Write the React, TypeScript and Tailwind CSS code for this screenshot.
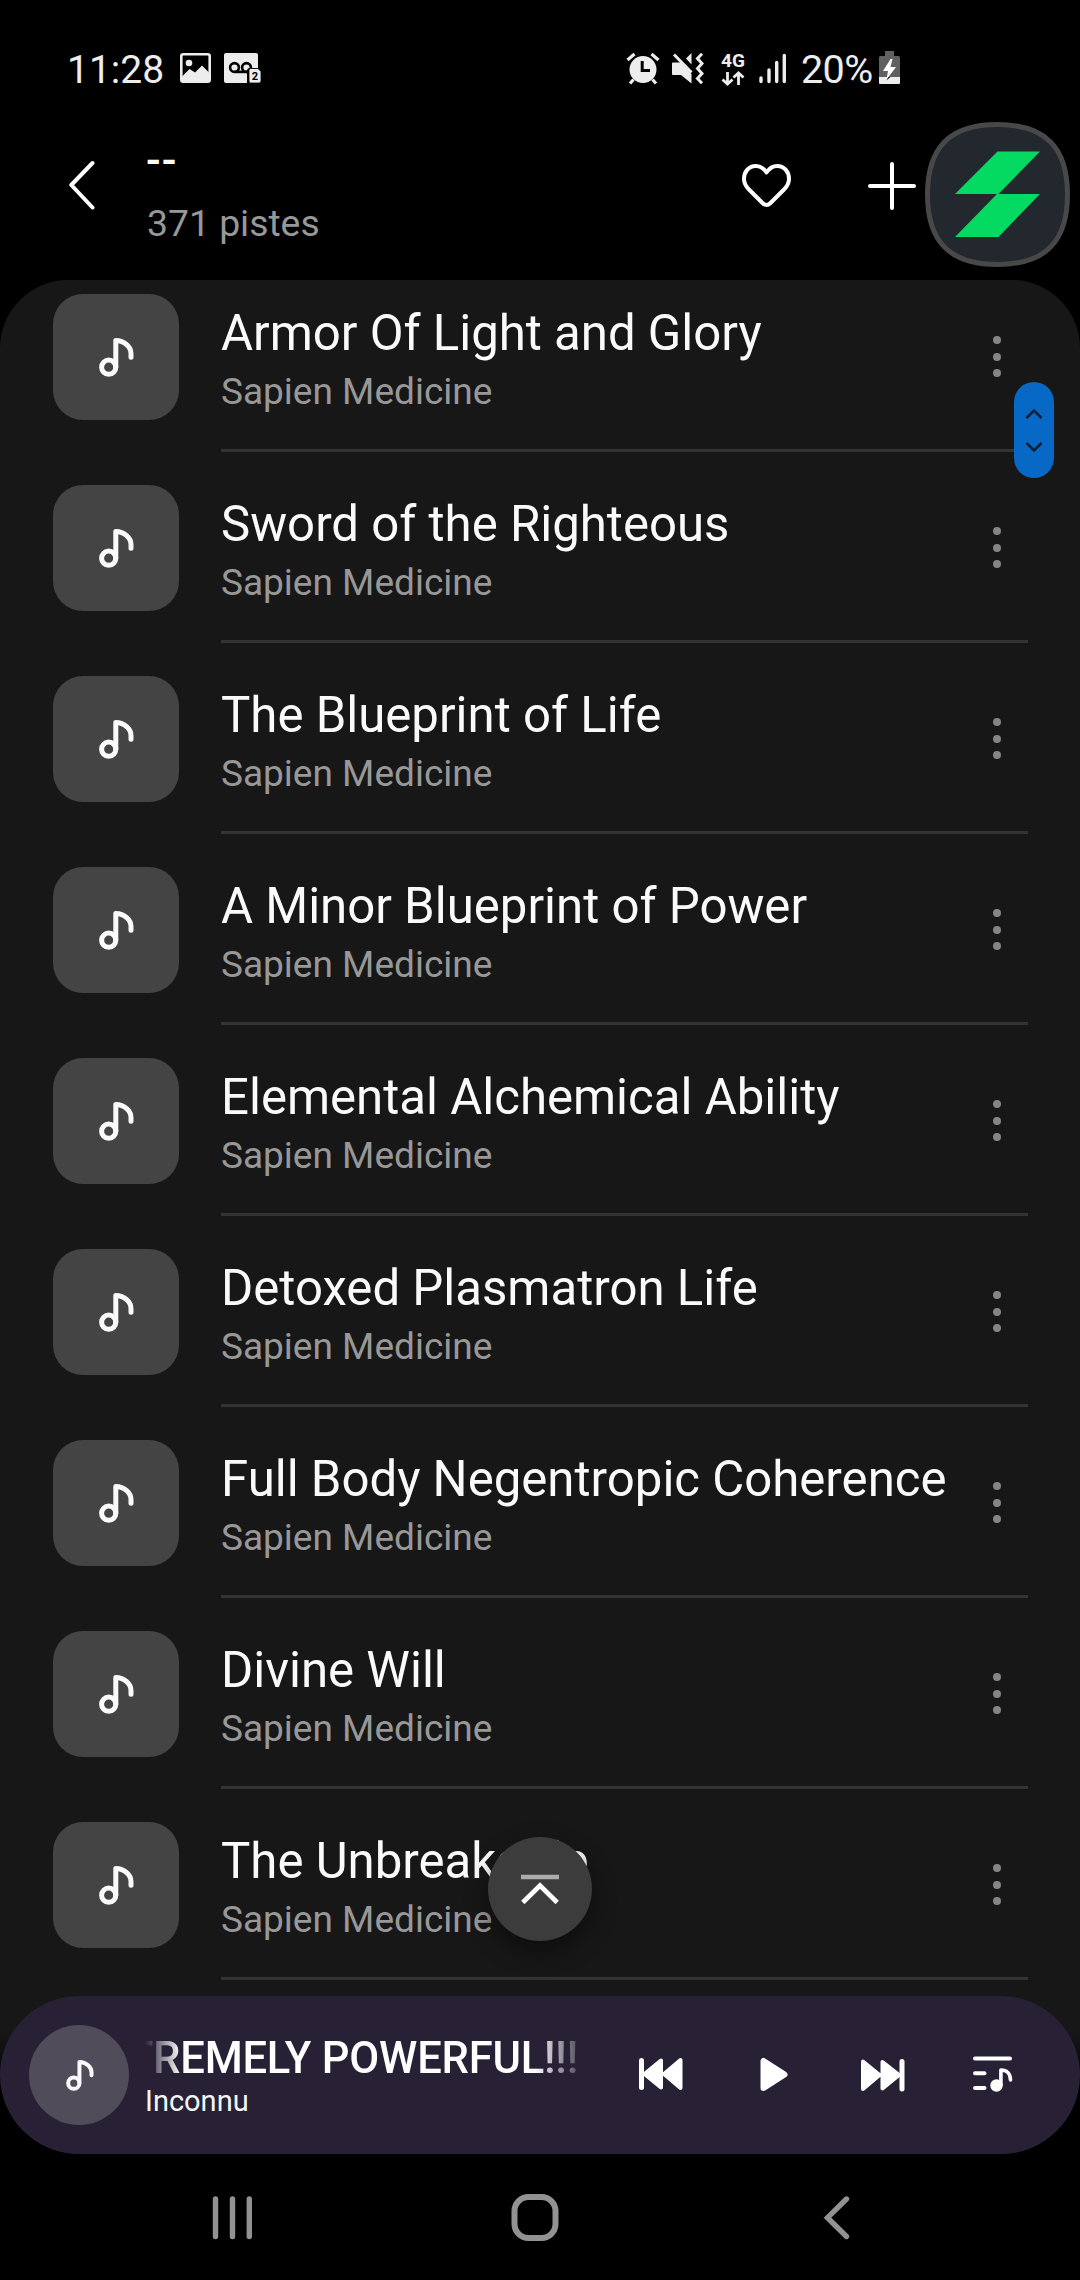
import type { ReactNode } from "react";

const tracks = [
  "Armor Of Light and Glory",
  "Sword of the Righteous",
  "The Blueprint of Life",
  "A Minor Blueprint of Power",
  "Elemental Alchemical Ability",
  "Detoxed Plasmatron Life",
  "Full Body Negentropic Coherence",
  "Divine Will",
  "The Unbreakable",
];

function NoteIcon({ className }: { className: string }) {
  return (
    <svg viewBox="0 0 35 39" className={className} fill="none" stroke="#fafafa" strokeWidth="5" strokeLinecap="round" strokeLinejoin="round">
      <circle cx="9.7" cy="29.2" r="7.1" />
      <path d="M16.8 29V2.6C25.500 2.800 32 9 32 15.500V19.200" />
    </svg>
  );
}

function StatusBar() {
  return (
    <div className="flex h-[110px] shrink-0 items-start pt-[50px]">
      <span className="ml-[67px] w-[113px] text-[39px] leading-[40px] whitespace-nowrap text-[#ededed]">11:28</span>
      <svg className="mt-[3px] h-[30px] w-[31px]" viewBox="0 0 31 30">
        <rect x="1.300" y="1.300" width="28.400" height="27.400" rx="2" fill="none" stroke="#ededed" strokeWidth="2.600" />
        <circle cx="9" cy="10" r="3.300" fill="#ededed" />
        <path d="M2 23.500 9.500 16 15 19.500 22 12.500 29 19.500V28H2Z" fill="#ededed" />
      </svg>
      <svg className="mt-[3px] ml-[13px] h-[30px] w-[37px]" viewBox="0 0 37 30">
        <path d="M2 0H32Q34 0 34 2V15H26Q23 15 23 18V30H2Q0 30 0 28V2Q0 0 2 0Z" fill="#ededed" />
        <g fill="none" stroke="#000" strokeWidth="2.600">
          <circle cx="10.500" cy="14.500" r="4.400" />
          <circle cx="22.500" cy="14.500" r="4.400" />
          <path d="M10.500 18.900H23" />
        </g>
        <path d="M26.500 15.500H34L37 18.500V28Q37 30 35 30H26.500Q25 30 25 28V17Q25 15.500 26.500 15.500Z" fill="#ededed" stroke="#000" strokeWidth=".8" />
        <text x="31" y="27" fontSize="11" fontWeight="700" textAnchor="middle" fill="#000">2</text>
      </svg>
      <div className="ml-auto flex items-start pr-[180px]">
        <svg className="mt-[2px] h-[33px] w-[34px]" viewBox="0 0 34 33">
          <circle cx="17" cy="17.500" r="13.500" fill="#ededed" />
          <path d="M1.500 8 8.500 2M25.500 2 32.500 8M7.500 27.500 4 31.500M26.500 27.500 30 31.500" stroke="#ededed" strokeWidth="3.200" />
          <path d="M16.200 9V18.500H24" fill="none" stroke="#000" strokeWidth="3" />
        </svg>
        <svg className="mt-[3px] ml-[12px] h-[31px] w-[32px]" viewBox="0 0 32 31">
          <path d="M0 10.500Q0 9.500 1 9.500H8.500L19.500 21V30.500L9 22H1Q0 22 0 21Z" fill="#ededed" />
          <path d="M14 5.500 19.500 0V11.500Z" fill="#ededed" />
          <path d="M2 1.500 19.500 19.500" stroke="#ededed" strokeWidth="3" />
          <path d="M30 .8 25.500 5.500 30 10.500 25.500 15.500 30 20.500 25.500 25.500 30 30.300" fill="none" stroke="#ededed" strokeWidth="3" />
        </svg>
        <svg className="mt-[2px] ml-[16px] h-[34px] w-[26px] overflow-visible" viewBox="0 0 26 34">
          <text x="13" y="15" fontSize="19" fontWeight="700" textAnchor="middle" textLength="24" lengthAdjust="spacingAndGlyphs" fill="#ededed">4G</text>
          <path d="M7.500 20V32M2.500 27.500 7.500 32 12.500 27.500M18.500 33V21M13.500 25.500 18.500 21 23.500 25.500" fill="none" stroke="#ededed" strokeWidth="2.800" />
        </svg>
        <svg className="mt-[3px] ml-[13px] h-[31px] w-[28px]" viewBox="0 0 28 31">
          <path d="M2 25V28.500M10 17V28.500M17.700 9.500V28.500M25.300 2.500V28.500" stroke="#ededed" strokeWidth="3.400" strokeLinecap="round" />
        </svg>
        <span className="ml-[14px] w-[78px] text-[39.500px] leading-[40px] tracking-[-0.6px] whitespace-nowrap text-[#ededed]">20%</span>
        <svg className="mt-px h-[33px] w-[21px]" viewBox="0 0 21 33">
          <path d="M6 0H15V5H19.500Q21 5 21 6.500V33H0V6.500Q0 5 1.500 5H6Z" fill="#606060" />
          <path d="M0 26H21V31.500Q21 33 19.500 33H1.500Q0 33 0 31.500Z" fill="#ededed" />
          <path d="M11.500 8 4 20H9L7.500 28.500 17 16H11.500L13.500 8Z" fill="#fff" />
          <path d="M9.200 26 7.500 29.500 11.500 26Z" fill="#222" />
        </svg>
      </div>
    </div>
  );
}

function Header() {
  return (
    <div className="flex h-[170px] shrink-0 items-start">
      <svg className="mt-[50px] ml-[68px] h-[50px] w-[28px]" viewBox="0 0 28 50" fill="none" stroke="#fff" strokeWidth="4" strokeLinecap="round" strokeLinejoin="round">
        <path d="M24.500 3 3.300 25 24.500 47.500" />
      </svg>
      <div className="mt-[26px] ml-[51px]">
        <div className="h-[63px] text-[44px] leading-[48px] font-medium tracking-[1px] text-white">
          <span className="inline-block origin-left -translate-x-px scale-x-[.98]">--</span>
        </div>
        <div className="text-[37.300px] leading-[48px] whitespace-nowrap text-[#989898]">371 pistes</div>
      </div>
      <svg className="mt-[53px] ml-auto h-[46px] w-[51px]" viewBox="0 0 51 46" fill="none" stroke="#fff" strokeWidth="4" strokeLinejoin="round">
        <path d="M25.500 9.500C22.500 5 18.500 3 14.800 3C8 3 3 8.500 3 16C3 20.500 5 23.500 8 26.500L21.500 40Q25.500 44 29.500 40L43 26.500C46 23.500 48 20.500 48 16C48 8.500 43 3 36.200 3C32.500 3 28.500 5 25.500 9.500Z" />
      </svg>
      <svg className="mt-[52px] ml-[76px] h-[48px] w-[48px]" viewBox="0 0 48 48" stroke="#fff" strokeWidth="4" strokeLinecap="round">
        <path d="M24 2V46M2 24H46" />
      </svg>
      <svg className="mt-[12px] mr-[10px] ml-[9px] h-[145px] w-[145px]" viewBox="0 0 145 145">
        <path d="M72.500 2.500C120 2.500 142.500 25 142.500 72.500S120 142.500 72.500 142.500 2.500 120 2.500 72.500 25 2.500 72.500 2.500Z" fill="#23272e" stroke="#484848" strokeWidth="5" />
        <path d="M72.500 29.500H115L73.500 72H115L73.500 115H30L72 72H30Z" fill="#04d962" />
      </svg>
    </div>
  );
}

function TrackRow({ title }: { title: string }) {
  return (
    <li className="flex h-[191px] shrink-0 pl-[53px]">
      <div className="mt-[33px] flex size-[126px] shrink-0 items-center justify-center rounded-[30px] bg-[#444]">
        <NoteIcon className="h-[39px] w-[35px]" />
      </div>
      <div className="ml-[42px] flex w-[807px] border-b-[3px] border-[#333] pt-[42px]">
        <div className="flex-1 whitespace-nowrap">
          <div className="h-[62px] text-[49.150px] leading-[60px] text-[#fafafa]">{title}</div>
          <div className="h-[54px] text-[37px] leading-[54px] text-[#989898]">Sapien Medicine</div>
        </div>
        <div className="mt-[33px] mr-[27px] flex h-[41px] w-2 flex-col justify-between">
          <i className="size-2 rounded-full bg-[#858585]" />
          <i className="size-2 rounded-full bg-[#858585]" />
          <i className="size-2 rounded-full bg-[#858585]" />
        </div>
      </div>
    </li>
  );
}

function IconButton({ label, className, children }: { label: string; className: string; children: ReactNode }) {
  return (
    <button aria-label={label} className={className}>
      {children}
    </button>
  );
}

function MiniPlayer() {
  return (
    <div className="relative z-10 -mt-[79px] flex h-[158px] w-full shrink-0 items-start rounded-full bg-[#282135]">
      <div className="mt-[29px] ml-[29px] flex size-[100px] items-center justify-center rounded-full bg-[#504c59]">
        <NoteIcon className="h-[31px] w-[28px] translate-x-px" />
      </div>
      <div className="mt-[36px] ml-[16px] w-[434px] whitespace-nowrap">
        <div className="flex h-[54px] justify-end overflow-hidden [mask-image:linear-gradient(to_right,transparent_0,#000_36px,#000_390px,transparent_445px)]">
          <span className="mr-px text-[43.500px] leading-[54px] font-medium tracking-[-0.2px] text-white">EXTREMELY POWERFUL!!!</span>
        </div>
        <div className="-mt-[3px] text-[29px] leading-[36px] text-[#f5f5f5]">Inconnu</div>
      </div>
      <IconButton label="Précédent" className="mt-[61px] ml-[59px]">
        <svg className="h-[34px] w-[46px]" viewBox="0 0 46 34" fill="#fff" stroke="#fff" strokeLinejoin="round" strokeLinecap="round">
          <path d="M23 3.500V30.500L6.500 17ZM42.500 3V31L26 17Z" strokeWidth="4" />
          <path d="M3.500 3.500V30.500" strokeWidth="5" />
        </svg>
      </IconButton>
      <IconButton label="Lecture" className="mt-[61px] ml-[76px]">
        <svg className="h-[35px] w-[28px]" viewBox="0 0 28 35" fill="#fff" stroke="#fff" strokeWidth="6" strokeLinejoin="round">
          <path d="M3.500 4V31L24.500 17.500Z" />
        </svg>
      </IconButton>
      <IconButton label="Suivant" className="mt-[62px] ml-[72px]">
        <svg className="h-[34px] w-[46px]" viewBox="0 0 46 34" fill="#fff" stroke="#fff" strokeLinejoin="round" strokeLinecap="round">
          <path d="M3 3.500V31L19.500 17ZM22.500 4V30.500L39 17Z" strokeWidth="4" />
          <path d="M42 3.500V31" strokeWidth="5" />
        </svg>
      </IconButton>
      <IconButton label="File d'attente" className="mt-[60px] ml-[67px]">
        <svg className="h-[36px] w-[40px]" viewBox="0 0 40 36" fill="none" stroke="#fff" strokeWidth="4" strokeLinecap="round">
          <path d="M2 2.500H37M2 17.300H11.500M2 32H11.500" />
          <circle cx="23.500" cy="29.500" r="6.200" fill="#fff" stroke="none" />
          <path d="M27.900 29V14C34 14 37.500 18 37.500 24" strokeWidth="3.600" strokeLinejoin="round" />
        </svg>
      </IconButton>
    </div>
  );
}

function NavBar() {
  return (
    <div className="flex h-[126px] shrink-0 items-start pt-[40px] pl-[212px]">
      <svg className="h-[48px] w-[40px]" viewBox="0 0 40 48" stroke="#929292" strokeWidth="5.400" strokeLinecap="round">
        <path d="M3.500 5V42.500M20.500 5V42.500M37.300 5V42.500" />
      </svg>
      <svg className="ml-[259px] h-[48px] w-[48px]" viewBox="0 0 48 48" fill="none" stroke="#929292" strokeWidth="6">
        <rect x="3.500" y="3" width="41" height="41" rx="14" />
      </svg>
      <svg className="ml-[263px] h-[48px] w-[30px]" viewBox="0 0 30 48" fill="none" stroke="#929292" strokeWidth="5.400" strokeLinecap="round">
        <path d="M24.500 5 5.500 23.700 24.500 42.500" />
      </svg>
    </div>
  );
}

export default function App() {
  return (
    <main className="relative flex h-[2280px] w-[1080px] flex-col overflow-hidden bg-black font-[Roboto,sans-serif]">
      <StatusBar />
      <Header />
      <section className="relative h-[1795px] shrink-0 overflow-hidden rounded-t-[68px] bg-[#171717] bg-[linear-gradient(to_bottom,transparent_1750px,#000_1810px)]">
        <ul className="-mt-[19px] flex flex-col">
          {tracks.map((title) => (
            <TrackRow key={title} title={title} />
          ))}
        </ul>
        <div className="absolute top-[102px] right-[26px] flex h-[96px] w-[40px] items-center justify-center rounded-full bg-[#0768c5]">
          <svg className="h-[46px] w-[18px]" viewBox="0 0 18 46" fill="none" stroke="#102036" strokeWidth="2.600">
            <path d="M1.500 11 9 3.500 16.500 11M1.500 36 9 43.500 16.500 36" />
          </svg>
        </div>
        <button aria-label="Haut de page" className="absolute top-[1557px] left-[488px] flex size-[104px] items-center justify-center rounded-full bg-[#3c3c3c] shadow-[0_10px_24px_rgba(0,0,0,0.45)]">
          <svg className="h-[30px] w-[38px]" viewBox="0 0 38 30" fill="none">
            <path d="M0 3H38" stroke="#acacac" strokeWidth="4.500" />
            <path d="M1.800 28.500 19 11.500 36.200 28.500" stroke="#fff" strokeWidth="4.800" />
          </svg>
        </button>
      </section>
      <MiniPlayer />
      <NavBar />
    </main>
  );
}
